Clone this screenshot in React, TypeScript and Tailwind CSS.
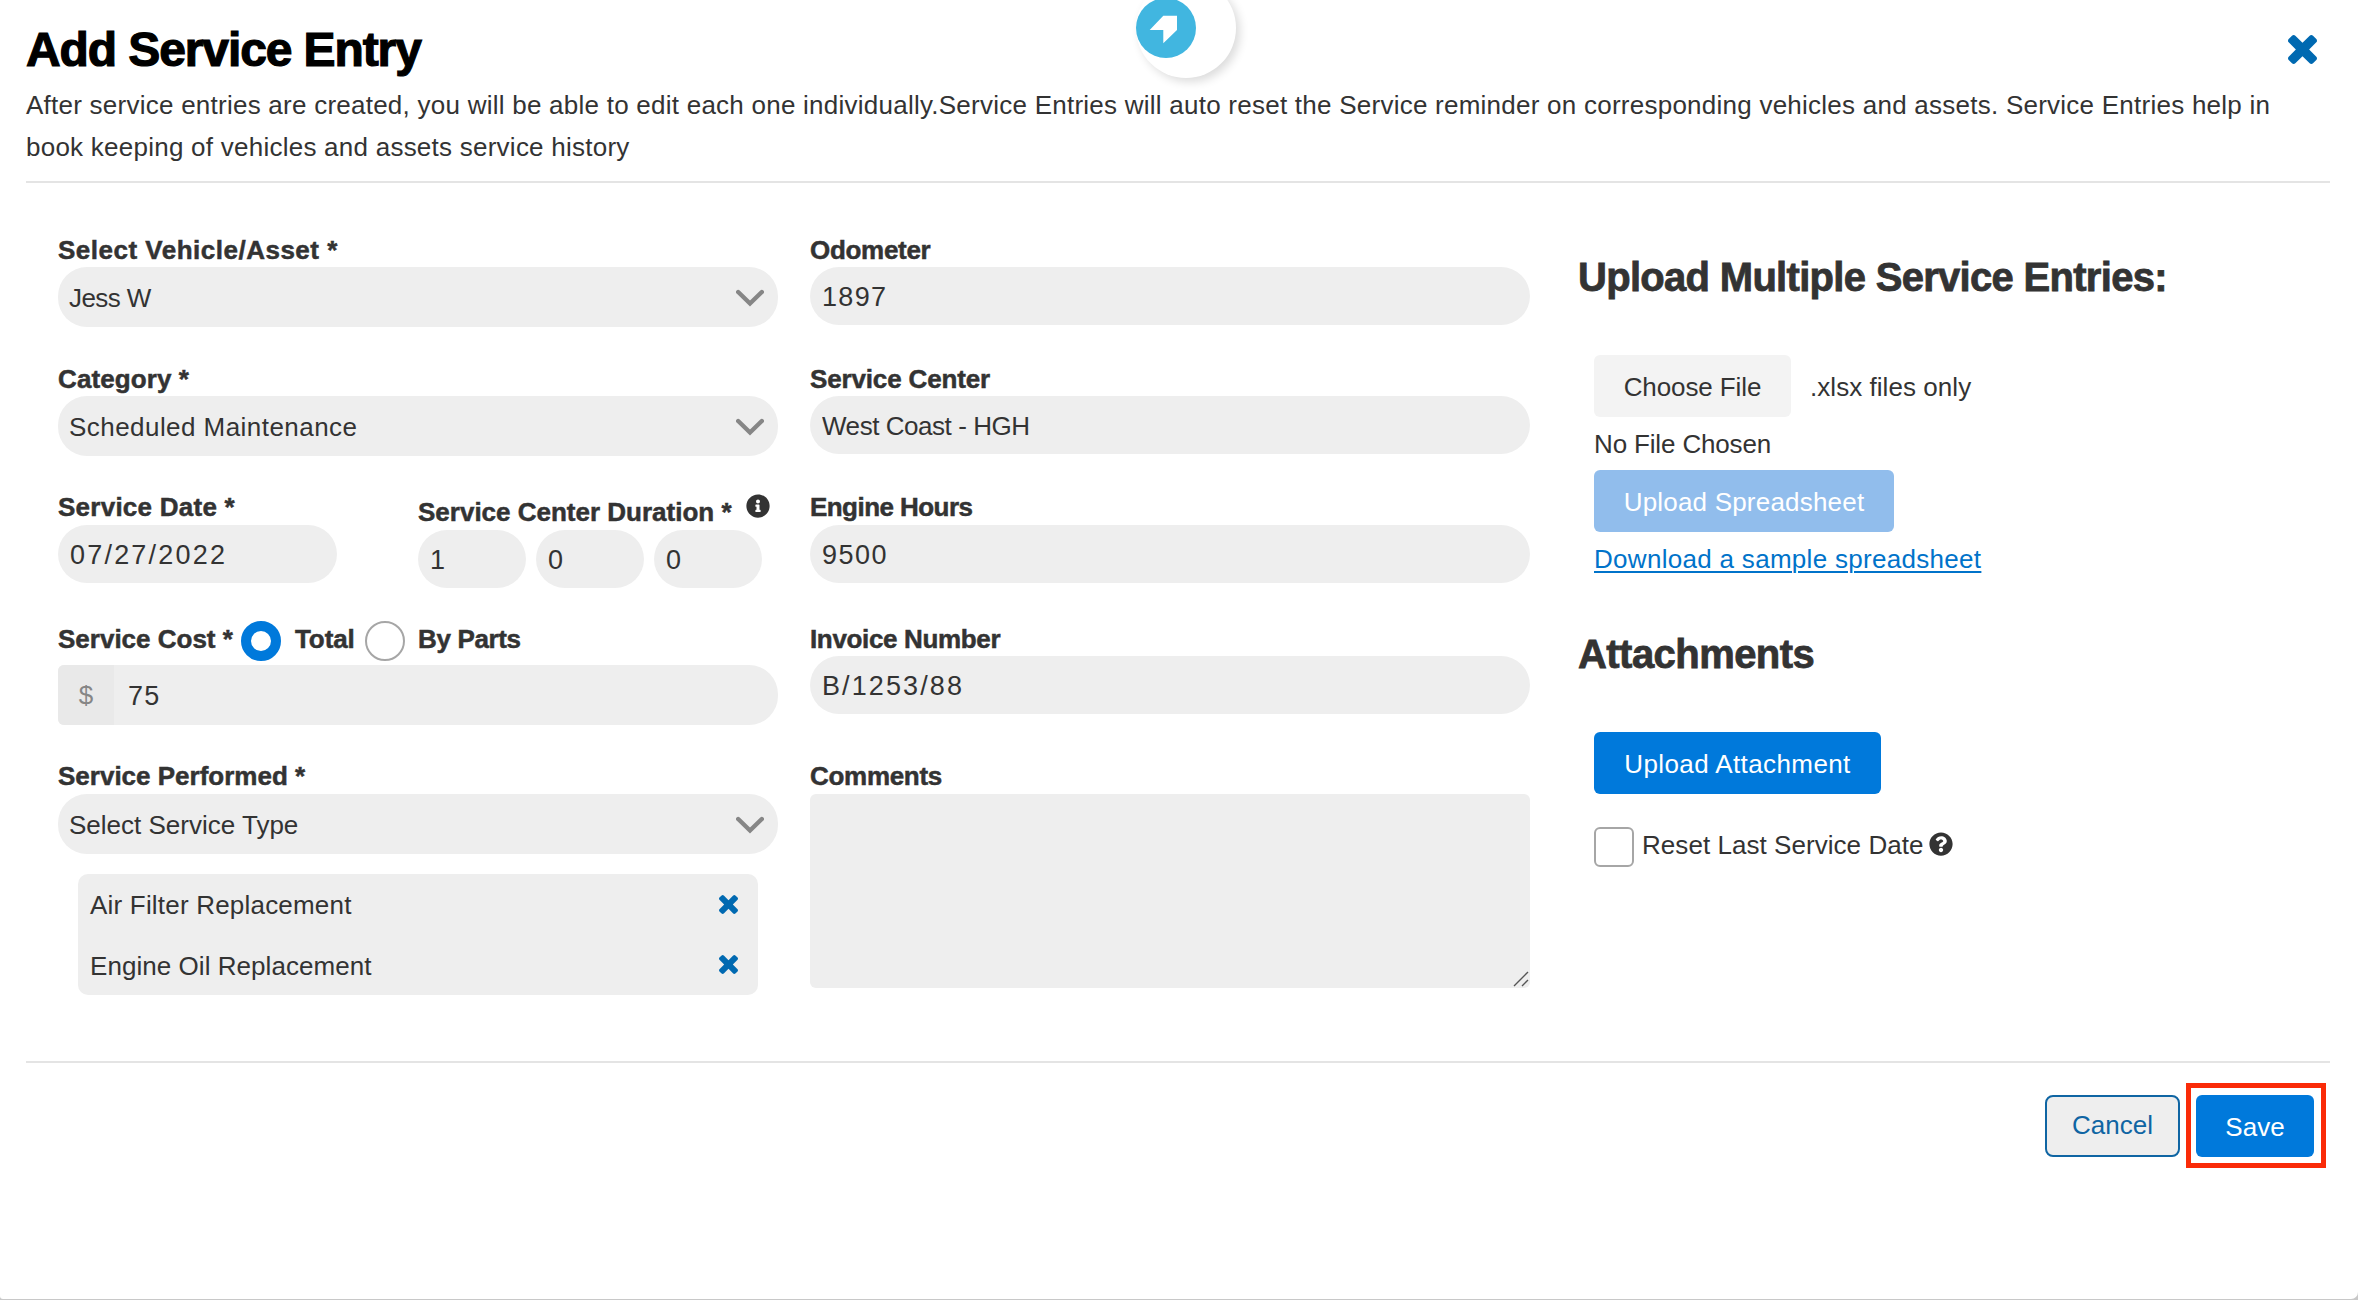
import { useState } from 'react';
import clsx from 'clsx';
import { FaInfoCircle, FaQuestionCircle } from 'react-icons/fa';

function CrossIcon({ className }: { className: string }) {
  return (
    <svg viewBox="302 366 1188 1188" className={className} fill="currentColor">
      <path d="M1490 1322q0 40-28 68l-136 136q-28 28-68 28t-68-28l-294-294-294 294q-28 28-68 28t-68-28l-136-136q-28-28-28-68t28-68l294-294-294-294q-28-28-28-68t28-68l136-136q28-28 68-28t68 28l294 294 294-294q28-28 68-28t68 28l136 136q28 28 28 68t-28 68l-294 294 294 294q28 28 28 68z" />
    </svg>
  );
}

function Label({ text, className }: { text: string; className?: string }) {
  return (
    <label className={clsx('block h-[33px] font-bold leading-8 whitespace-nowrap [-webkit-text-stroke:0.5px_#333333]', className)}>
      {text}
    </label>
  );
}

function SelectBox({ value, className }: { value: string; className?: string }) {
  return (
    <button className="flex h-[60px] w-full items-center justify-between rounded-[29px] bg-[#eeeeee] pr-[14px] pl-[11px] text-left">
      <span className={clsx('pt-0.5', className)}>{value}</span>
      <svg viewBox="0 0 28 18" className="mt-0.5 h-[18px] w-[28px]" fill="none" stroke="#868686" strokeWidth="4.4">
        <path d="M2.2 3 14 14.5 25.8 3" strokeLinecap="round" />
      </svg>
    </button>
  );
}

function TextInput({ value, className }: { value: string; className?: string }) {
  return (
    <input
      type="text"
      defaultValue={value}
      className={clsx('block h-[58px] rounded-[29px] bg-[#eeeeee] pt-0.5 pl-3 outline-none', className)}
    />
  );
}

function Radio({ checked, onChange }: { checked: boolean; onChange: () => void }) {
  return (
    <button
      role="radio"
      aria-checked={checked}
      onClick={onChange}
      className={clsx(
        'size-10 shrink-0 rounded-full bg-white',
        checked ? 'border-[10px] border-[#0079db]' : 'border-2 border-[#a6a6a6]'
      )}
    />
  );
}

export default function App() {
  const [costType, setCostType] = useState('total');
  const [resetDate, setResetDate] = useState(false);
  const [services, setServices] = useState(['Air Filter Replacement', 'Engine Oil Replacement']);

  const removeService = (name: string) => {
    setServices(services.filter((s) => s !== name));
  };

  return (
    <div className="h-[1300px] w-[2358px] overflow-hidden bg-[#c8c8c8] font-['Liberation_Sans',Arial,sans-serif] text-[26px] text-[#333333]">
      <div className="relative h-[1299px] rounded-br-[7px] rounded-bl-[3px] bg-white pr-7 pl-[26px]">
        {/* Loader badge hanging over the top edge */}
        <div className="absolute -top-[22px] left-[1136px] size-[100px] rounded-full bg-white shadow-[4px_4px_10px_rgba(0,0,0,0.14)]">
          <svg viewBox="0 0 60 60" className="mt-5 size-[60px]">
            <circle cx="30" cy="30" r="30" fill="#41b6e0" />
            <path d="M27.3 17.7H41V32L27.3 45.3V32H13.7z" fill="#fff" />
          </svg>
        </div>

        {/* Header */}
        <header className="flex h-[183px] flex-col border-b-2 border-[#e4e4e4]">
          <div className="flex h-[84px] items-start justify-between pt-[23px] pr-[13px]">
            <h1 className="text-[48px] leading-[54px] font-bold tracking-[-1.1px] text-black [-webkit-text-stroke:1.2px_black]">
              Add Service Entry
            </h1>
            <button className="mt-3 text-[#0069b1]">
              <CrossIcon className="size-[29px]" />
            </button>
          </div>
          <p className="leading-[42px] tracking-[0.245px]">
            <span className="whitespace-nowrap">
              After service entries are created, you will be able to edit each one individually.Service Entries will auto reset the Service reminder on corresponding vehicles and assets. Service Entries help in
            </span>
            <br />
            book keeping of vehicles and assets service history
          </p>
        </header>

        <main className="flex h-[878px] pt-[51px] pl-8">
          {/* Left column */}
          <section className="mr-8 w-[720px]">
            <div className="h-[129px]">
              <Label text="Select Vehicle/Asset *" className="tracking-[0.5px]" />
              <SelectBox value="Jess W" className="tracking-[-0.6px]" />
            </div>
            <div className="h-[129px]">
              <Label text="Category *" className="tracking-[0.1px]" />
              <SelectBox value="Scheduled Maintenance" className="tracking-[0.45px]" />
            </div>
            <div className="flex h-[131px]">
              <div className="w-[360px]">
                <Label text="Service Date *" className="leading-[30px] tracking-[0.25px]" />
                <TextInput value="07/27/2022" className="w-[279px] text-[27px] tracking-[2.2px]" />
              </div>
              <div>
                <div className="flex">
                  <Label text="Service Center Duration *" className="mt-1 mb-px w-[328px]" />
                  <FaInfoCircle className="mt-0.5 size-6" />
                </div>
                <div className="flex gap-2.5">
                  <TextInput value="1" className="w-[108px] text-[27px]" />
                  <TextInput value="0" className="w-[108px] text-[27px]" />
                  <TextInput value="0" className="w-[108px] text-[27px]" />
                </div>
              </div>
            </div>
            <div className="h-[137px]">
              <div className="flex h-[42px] items-start">
                <Label text="Service Cost *" className="w-[183px]" />
                <div className="-mt-0.5 flex">
                  <Radio checked={costType === 'total'} onChange={() => setCostType('total')} />
                  <Label text="Total" className="mt-0.5 ml-[14px] w-[70px] tracking-[-0.1px]" />
                  <Radio checked={costType === 'parts'} onChange={() => setCostType('parts')} />
                  <Label text="By Parts" className="mt-0.5 ml-[13px] tracking-[-0.35px]" />
                </div>
              </div>
              <div className="flex h-[60px] overflow-hidden rounded-l-md rounded-r-[29px] bg-[#eeeeee]">
                <span className="flex w-[56px] items-center justify-center bg-[#e9e9e9] text-[#868686]">$</span>
                <input type="text" defaultValue="75" className="flex-1 bg-transparent pt-0.5 pl-[14px] text-[27px] tracking-[1.3px] outline-none" />
              </div>
            </div>
            <Label text="Service Performed *" className="h-[34px]" />
            <SelectBox value="Select Service Type" />
            <ul className="mx-5 mt-5 h-[121px] rounded-[10px] bg-[#eeeeee]">
              {services.map((name) => (
                <li key={name} className="flex h-[60px] items-center justify-between pr-5 pl-3">
                  <span className={clsx(name.startsWith('Air') ? 'pt-0.5 tracking-[0.2px]' : 'pt-1 tracking-[0.05px]')}>{name}</span>
                  <button className="text-[#0069b1]" onClick={() => removeService(name)}>
                    <CrossIcon className="size-[19px]" />
                  </button>
                </li>
              ))}
            </ul>
          </section>

          {/* Middle column */}
          <section className="mr-12 w-[720px]">
            <div className="h-[129px]">
              <Label text="Odometer" className="tracking-[-0.3px]" />
              <TextInput value="1897" className="w-full text-[27px] tracking-[1.3px]" />
            </div>
            <div className="h-[129px]">
              <Label text="Service Center" className="tracking-[-0.15px]" />
              <TextInput value="West Coast - HGH" className="w-full tracking-[-0.45px]" />
            </div>
            <div className="h-[131px]">
              <Label text="Engine Hours" className="leading-[30px] tracking-[-0.55px]" />
              <TextInput value="9500" className="w-full text-[27px] tracking-[1.5px]" />
            </div>
            <div className="h-[137px]">
              <Label text="Invoice Number" className="tracking-[-0.35px]" />
              <TextInput value="B/1253/88" className="w-full text-[27px] tracking-[2.1px]" />
            </div>
            <Label text="Comments" className="h-[34px] tracking-[-0.3px]" />
            <div className="relative">
              <textarea className="block h-[194px] w-full resize-none rounded-md bg-[#eeeeee] outline-none" />
              <svg viewBox="0 0 16 16" className="absolute right-px bottom-px size-4" stroke="#555" strokeWidth="1.4">
                <path d="M1 15 15 1M9 15 15 9" />
              </svg>
            </div>
          </section>

          {/* Uploads */}
          <section className="flex flex-col items-start">
            <h2 className="mt-[19px] text-[40px] leading-[48px] font-bold tracking-[-0.7px] [-webkit-text-stroke:0.8px_#333333]">
              Upload Multiple Service Entries:
            </h2>
            <div className="mt-[54px] ml-4 flex flex-col items-start">
              <div className="flex items-center">
                <button className="h-[62px] w-[197px] rounded-md bg-[#f3f3f3] pt-0.5 tracking-[-0.1px]">Choose File</button>
                <span className="ml-[19px] pt-0.5 tracking-[0.05px]">.xlsx files only</span>
              </div>
              <span className="mt-1.5 h-[47px] leading-[42px] tracking-[-0.15px]">No File Chosen</span>
              <button className="h-[62px] w-[300px] rounded-md bg-[#91bdec] pt-0.5 tracking-[0.2px] text-white">
                Upload Spreadsheet
              </button>
              <a href="#" className="mt-1.5 leading-[42px] tracking-[0.3px] text-[#0073ca] underline decoration-2 underline-offset-[3px]">
                Download a sample spreadsheet
              </a>
            </div>
            <h2 className="mt-[50px] text-[40px] leading-[48px] font-bold tracking-[-0.55px] [-webkit-text-stroke:0.8px_#333333]">
              Attachments
            </h2>
            <div className="mt-[54px] ml-4">
              <button className="h-[62px] w-[287px] rounded-md bg-[#0079db] pt-0.5 tracking-[0.4px] text-white">
                Upload Attachment
              </button>
              <div className="mt-[33px] flex">
                <button
                  role="checkbox"
                  aria-checked={resetDate}
                  onClick={() => setResetDate(!resetDate)}
                  className="size-10 rounded-md border-2 border-[#a6a6a6] bg-white"
                />
                <span className="ml-2 leading-9 tracking-[0.05px] whitespace-nowrap">Reset Last Service Date</span>
                <FaQuestionCircle className="mt-[5px] ml-[5px] size-6" />
              </div>
            </div>
          </section>
        </main>

        {/* Footer */}
        <footer className="flex items-start justify-end border-t-2 border-[#e4e4e4] pt-5 pr-1">
          <button className="mt-3 mr-1.5 h-[62px] w-[135px] rounded-lg border-2 border-[#0f65a3] bg-[#eeeeee] pb-0.5 text-[#0f65a3]">
            Cancel
          </button>
          <div className="h-[85px] w-[140px] border-[5px] border-[#fa2b08] pt-[7px] pl-[5px]">
            <button className="h-[62px] w-[118px] rounded-md bg-[#0079db] pt-0.5 text-white">Save</button>
          </div>
        </footer>
      </div>
    </div>
  );
}
